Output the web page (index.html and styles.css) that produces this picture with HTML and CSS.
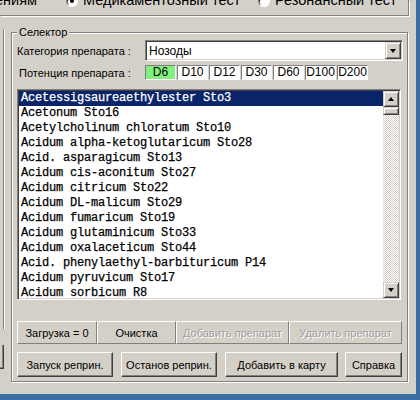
FILE: index.html
```html
<!DOCTYPE html>
<html>
<head>
<meta charset="utf-8">
<link rel="stylesheet" href="styles.css">
</head>
<body>
<div class="screen">
  <div class="window">
    <div class="radioframe">
      <span class="rtext lead">ениям</span>
      <span class="radio checked"></span>
      <span class="rtext">Медикаментозный тест</span>
      <span class="radio"></span>
      <span class="rtext">Резонансный тест</span>
    </div>
    <div class="body">
      <div class="leftedge">
        <div class="leftbar"></div>
        <div class="leftbtn"></div>
      </div>
      <div class="groupbox">
        <span class="gtitle">Селектор</span>
        <div class="row1">
          <span class="label">Категория препарата :</span>
          <div class="combo">
            <span class="combotext">Нозоды</span>
            <span class="dropbtn"><span class="arrow down"></span></span>
          </div>
        </div>
        <div class="row2">
          <span class="label">Потенция препарата :</span>
          <div class="potencies">
            <span class="pot on">D6</span>
            <span class="pot">D10</span>
            <span class="pot">D12</span>
            <span class="pot">D30</span>
            <span class="pot">D60</span>
            <span class="pot">D100</span>
            <span class="pot">D200</span>
          </div>
        </div>
        <div class="listbox">
          <div class="items">
            <div class="item sel">Acetessigsaureaethylester Sto3</div>
            <div class="item">Acetonum Sto16</div>
            <div class="item">Acetylcholinum chloratum Sto10</div>
            <div class="item">Acidum alpha-ketoglutaricum Sto28</div>
            <div class="item">Acid. asparagicum Sto13</div>
            <div class="item">Acidum cis-aconitum Sto27</div>
            <div class="item">Acidum citricum Sto22</div>
            <div class="item">Acidum DL-malicum Sto29</div>
            <div class="item">Acidum fumaricum Sto19</div>
            <div class="item">Acidum glutaminicum Sto33</div>
            <div class="item">Acidum oxalaceticum Sto44</div>
            <div class="item">Acid. phenylaethyl-barbituricum P14</div>
            <div class="item">Acidum pyruvicum Sto17</div>
            <div class="item">Acidum sorbicum R8</div>
          </div>
          <div class="vscroll">
            <span class="sbtn"><span class="arrow up"></span></span>
            <span class="thumb"></span>
            <span class="track"></span>
            <span class="sbtn"><span class="arrow down"></span></span>
          </div>
        </div>
        <div class="btnrow1">
          <span class="fbtn w80">Загрузка = 0</span>
          <span class="fbtn w79">Очистка</span>
          <span class="fbtn w113 disabled">Добавить препарат</span>
          <span class="fbtn w113 disabled">Удалить препарат</span>
        </div>
        <div class="btnrow2">
          <span class="btn w96">Запуск реприн.</span>
          <span class="btn w96">Останов реприн.</span>
          <span class="btn w113">Добавить в карту</span>
          <span class="btn w57">Справка</span>
        </div>
      </div>
    </div>
  </div>
</div>
</body>
</html>
```

FILE: styles.css
```css
html, body {
  margin: 0;
  padding: 0;
}
body {
  width: 420px;
  height: 400px;
  overflow: hidden;
  font-family: "Liberation Sans", Arial, sans-serif;
  font-size: 11px;
  color: #000;
}
.screen {
  width: 420px;
  height: 400px;
  background: #3a6ea5;
}
.window {
  width: 416px;
  height: 394px;
  background: #d4d0c8;
  display: flex;
  flex-direction: column;
  overflow: hidden;
}

/* top radio frame */
.radioframe {
  box-sizing: border-box;
  width: 409px;
  height: 16px;
  border-right: 1px solid #808080;
  border-bottom: 1px solid #808080;
  box-shadow: 1px 1px 0 #fff;
  display: grid;
  grid-template-columns: 66px 17px 175px 17px auto;
  align-items: start;
  flex: none;
}
.rtext {
  font-size: 14.5px;
  line-height: 16px;
  margin-top: -8px;
  white-space: nowrap;
}
.rtext.lead {
  margin-left: -5px;
}
.radio {
  box-sizing: border-box;
  width: 12px;
  height: 12px;
  margin-top: -5px;
  border-radius: 50%;
  background: #fff;
  border: 1px solid;
  border-color: #808080 #fff #fff #808080;
  box-shadow: inset 1px 1px 0 #404040;
  display: flex;
  align-items: center;
  justify-content: center;
}
.radio.checked::after {
  content: "";
  width: 4px;
  height: 4px;
  border-radius: 50%;
  background: #000;
}

/* body */
.body {
  display: flex;
  padding-top: 16px;
  flex: none;
}
.leftedge {
  width: 11px;
  display: flex;
  flex-direction: column;
}
.leftbar {
  width: 3px;
  height: 300px;
  margin-top: -3px;
  border-right: 1px solid #808080;
  box-shadow: 1px 0 0 #fff;
}
.leftbtn {
  width: 3px;
  height: 23px;
  margin-top: 16px;
  border-right: 1px solid #404040;
  border-bottom: 1px solid #404040;
  box-shadow: inset -1px -1px 0 #808080;
}

.groupbox {
  position: relative;
  box-sizing: border-box;
  width: 397px;
  height: 350px;
  border: 1px solid #808080;
  box-shadow: inset 1px 1px 0 #fff, 1px 1px 0 #fff;
  padding: 7px 0 0 5px;
}
.gtitle {
  position: absolute;
  left: 5px;
  top: -8px;
  padding: 0 2px;
  background: #d4d0c8;
  line-height: 14px;
}
.row1 {
  display: flex;
  align-items: center;
  height: 21px;
}
.label {
  width: 128px;
  flex: none;
  white-space: nowrap;
}
.row2 .label {
  padding-left: 2px;
  width: 126px;
}
.combo {
  box-sizing: border-box;
  width: 258px;
  height: 21px;
  background: #fff;
  border: 1px solid;
  border-color: #808080 #fff #fff #808080;
  box-shadow: inset 1px 1px 0 #404040, inset -1px -1px 0 #d4d0c8;
  display: flex;
  align-items: center;
  padding: 1px 1px 1px 3px;
  font-size: 12px;
}
.combotext {
  flex: 1;
}
.dropbtn {
  box-sizing: border-box;
  width: 16px;
  height: 17px;
  background: #d4d0c8;
  border: 1px solid;
  border-color: #d4d0c8 #404040 #404040 #d4d0c8;
  box-shadow: inset 1px 1px 0 #fff, inset -1px -1px 0 #808080;
  display: flex;
  align-items: center;
  justify-content: center;
}
.arrow {
  width: 0;
  height: 0;
  border-left: 3.5px solid transparent;
  border-right: 3.5px solid transparent;
}
.arrow.down {
  border-top: 4px solid #000;
}
.arrow.up {
  border-bottom: 4px solid #000;
}

.row2 {
  display: flex;
  align-items: center;
  height: 15px;
  margin-top: 4px;
}
.potencies {
  display: flex;
  gap: 1px;
}
.pot {
  box-sizing: border-box;
  width: 31px;
  height: 15px;
  background: #fff;
  border: 1px solid;
  border-color: #808080 #fff #fff #808080;
  text-align: center;
  font-size: 12px;
  line-height: 13px;
}
.pot.on {
  background: #80f080;
}

/* listbox */
.listbox {
  box-sizing: border-box;
  width: 384px;
  height: 211px;
  margin-top: 9px;
  background: #fff;
  border: 1px solid;
  border-color: #808080 #fff #fff #808080;
  box-shadow: inset 1px 1px 0 #404040, inset -1px -1px 0 #d4d0c8;
  padding: 1px;
  display: flex;
}
.items {
  flex: 1;
  overflow: hidden;
  font-family: "Liberation Mono", "Courier New", monospace;
  font-size: 12px;
  letter-spacing: -0.2px;
  -webkit-text-stroke: 0.25px currentColor;
}
.item {
  height: 15px;
  line-height: 15px;
  padding-left: 2px;
  white-space: pre;
}
.item.sel {
  background: #0a246a;
  color: #fff;
}
.vscroll {
  width: 16px;
  display: flex;
  flex-direction: column;
}
.sbtn, .thumb {
  box-sizing: border-box;
  width: 16px;
  height: 16px;
  background: #d4d0c8;
  border: 1px solid;
  border-color: #d4d0c8 #404040 #404040 #d4d0c8;
  box-shadow: inset 1px 1px 0 #fff, inset -1px -1px 0 #808080;
  display: flex;
  align-items: center;
  justify-content: center;
  flex: none;
}
.thumb {
  height: 8px;
}
.track {
  flex: 1;
  background: repeating-conic-gradient(#fff 0 25%, #d4d0c8 0 50%) 0 0 / 2px 2px;
}

/* buttons */
.btnrow1 {
  display: flex;
  margin-top: 21px;
  height: 23px;
}
.fbtn {
  box-sizing: border-box;
  height: 23px;
  border: 1px solid;
  border-color: #fff #808080 #808080 #fff;
  display: flex;
  align-items: center;
  justify-content: center;
  white-space: nowrap;
}
.fbtn.disabled {
  color: #a0a0a0;
  text-shadow: 1px 1px 0 #fff;
}
.btnrow2 {
  display: flex;
  margin-top: 8px;
  height: 25px;
}
.btn {
  box-sizing: border-box;
  height: 25px;
  border: 1px solid;
  border-color: #fff #404040 #404040 #fff;
  box-shadow: inset -1px -1px 0 #808080;
  display: flex;
  align-items: center;
  justify-content: center;
  white-space: nowrap;
  margin-right: 8px;
}
.btn:last-child {
  margin-right: 0;
}
.btn.w113 {
  margin-right: 7px;
}
.w57 { width: 57px; }
.w79 { width: 79px; }
.w80 { width: 80px; }
.w96 { width: 96px; }
.w113 { width: 113px; }
```
